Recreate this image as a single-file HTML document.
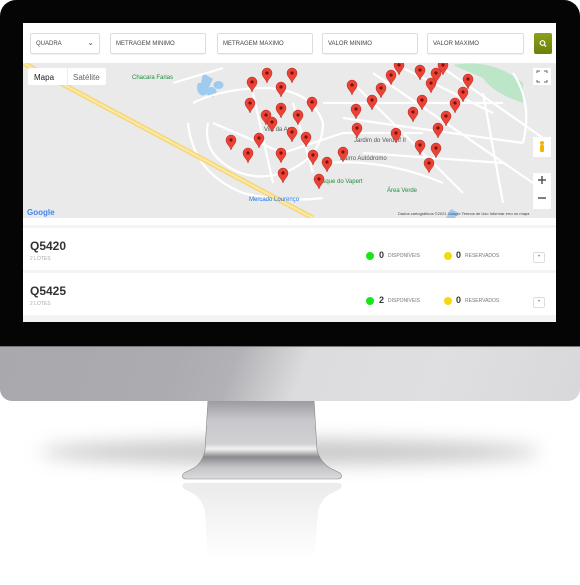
<!DOCTYPE html>
<html><head><meta charset="utf-8">
<style>
*{margin:0;padding:0;box-sizing:border-box}
body{width:580px;height:585px;background:#fff;position:relative;overflow:hidden;font-family:"Liberation Sans",sans-serif}
.bezel{position:absolute;left:0;top:0;width:580px;height:346px;background:#050505;border-radius:16px 16px 0 0}
.chin{position:absolute;left:0;top:346px;width:580px;height:55px;border-radius:0 0 12px 12px;background:linear-gradient(110deg,#a9a9ad 0%,#acacb0 30%,#b2b2b6 40%,#dcdcdf 52%,#dfdfe1 75%,#d8d8da 100%);border-top:1px solid #777}
.shadow{position:absolute;left:40px;top:440px;width:500px;height:24px;border-radius:50%;background:#b8b8b8;filter:blur(9px);opacity:.8}
.screen{position:absolute;left:23px;top:23px;width:533px;height:299px;background:#fff;overflow:hidden}
.inp{position:absolute;top:10px;height:21px;border:1px solid #ddd;border-radius:2px;background:#fff;font-size:6px;color:#444;padding:7px 0 0 5px;box-shadow:0 1px 1px rgba(0,0,0,.06)}
.btn{position:absolute;left:511px;top:10px;width:18px;height:21px;background:linear-gradient(#8aa21a,#6b7f0a);border-radius:2px}
.map{position:absolute;left:0;top:40px;width:533px;height:155px;background:#eaeaea;overflow:hidden}
.row{position:absolute;left:0;width:533px;height:42px;background:#fff}
.t{position:absolute;left:7px;top:11px;font-size:12px;font-weight:bold;color:#333}
.s{position:absolute;left:7px;top:28px;font-size:5px;color:#aaa}
.d{position:absolute;top:24px;width:8px;height:8px;border-radius:50%}
.n{position:absolute;top:22px;font-size:9px;font-weight:bold;color:#333}
.l{position:absolute;top:25px;font-size:5px;color:#777}
.pl{position:absolute;left:510px;top:24px;width:12px;height:11px;border:1px solid #ddd;border-radius:2px;font-size:6px;color:#888;text-align:center;line-height:9px}
</style></head><body>
<div class="shadow"></div>
<svg style="position:absolute;left:0;top:0" width="580" height="585">
<defs>
<linearGradient id="st" x1="0" y1="0" x2="0" y2="1">
<stop offset="0" stop-color="#9a9a9e"/><stop offset=".25" stop-color="#c8c8cc"/><stop offset=".55" stop-color="#d0d0d3"/><stop offset=".62" stop-color="#f2f2f2"/><stop offset=".72" stop-color="#8a8a8e"/><stop offset=".85" stop-color="#c4c4c7"/><stop offset="1" stop-color="#dcdcde"/></linearGradient>
<linearGradient id="rf" x1="0" y1="0" x2="0" y2="1"><stop offset="0" stop-color="#e6e6e8"/><stop offset="1" stop-color="#fff"/></linearGradient>
</defs>
<path d="M208 400 L314 400 L317 450 Q320 462 330 468 L340 473 Q344 478 338 479 L186 479 Q180 478 184 473 L194 468 Q203 462 205 450 Z" fill="url(#st)" stroke="#888" stroke-width=".6"/>
<path d="M186 483 L338 483 Q344 484 340 489 L330 494 Q320 500 318 512 L314 560 L208 560 L205 512 Q203 500 194 494 L184 489 Q180 484 186 483Z" fill="url(#rf)" opacity=".8"/>
</svg>
<div class="bezel"></div>
<div class="chin"></div>
<div class="screen">
<div class="inp" style="left:7px;width:70px">QUADRA<span style="position:absolute;right:5px;top:4px;font-size:8px;color:#555">&#8964;</span></div>
<div class="inp" style="left:87px;width:96px">METRAGEM MINIMO</div>
<div class="inp" style="left:194px;width:96px">METRAGEM MAXIMO</div>
<div class="inp" style="left:299px;width:96px">VALOR MINIMO</div>
<div class="inp" style="left:404px;width:97px">VALOR MAXIMO</div>
<div class="btn"><svg width="18" height="21"><circle cx="8.5" cy="10" r="2.3" fill="none" stroke="#fff" stroke-width="1.2"/><path d="M10.2 11.7L12 13.5" stroke="#fff" stroke-width="1.3"/></svg></div>
<div class="map">
<svg width="533" height="155" style="position:absolute;left:0;top:0">
<defs><g id="p"><path d="M0 10 C-1 6 -5 4 -5 0 A5 5 0 1 1 5 0 C5 4 1 6 0 10Z" fill="#ea4335" stroke="#b3261e" stroke-width=".5"/><circle r="1.6" fill="#7a1010"/></g></defs>
<path d="M430 2 Q470 -5 500 20 L500 40 Q470 30 460 15Z" fill="#bde5c8"/>
<path d="M180 10 l10 6 -4 8 -8 -4Z M195 18 a5 4 0 1 0 1 0Z" fill="#9fcbf0"/>
<path d="M175 20 a6 8 0 1 0 10 0Z M188 24 a5 5 0 1 0 1 0Z" fill="#9fcbf0"/>
<path d="M420 160 l8 -14 6 3 -4 14Z" fill="#9fcbf0"/>
<g stroke="#fff" stroke-width="2.2" fill="none">
<path d="M170 40 Q200 25 245 25 Q290 28 300 60 Q300 95 260 110 Q225 120 200 100 Q180 85 185 60"/>
<path d="M165 60 Q170 110 220 130 Q260 140 300 135"/>
<path d="M190 60 L260 90 L320 70 L400 70"/><path d="M230 30 L250 120"/><path d="M270 40 L290 110"/>
<path d="M300 40 L480 40"/><path d="M320 55 L500 80"/><path d="M340 90 L480 100"/><path d="M350 10 L510 120"/><path d="M380 5 L470 50"/><path d="M420 5 L520 75"/><path d="M330 20 L440 130"/><path d="M300 100 Q360 95 420 120"/><path d="M460 30 L480 140"/><path d="M490 10 Q510 40 500 80"/><path d="M150 20 L200 5"/>
</g>
<path d="M0 0 L290 155" stroke="#f5d77a" stroke-width="5"/>
<path d="M0 0 L290 155" stroke="#fbe9a8" stroke-width="2"/>
<rect x="5" y="5" width="78" height="17" fill="#fff" rx="2"/>
<rect x="44" y="5" width="1" height="17" fill="#eee"/>
<text x="11" y="17" font-size="8" fill="#222" font-family="Liberation Sans">Mapa</text>
<text x="50" y="17" font-size="8" fill="#666" font-family="Liberation Sans">Satélite</text>
<text x="109" y="16" font-size="6" fill="#1e8e3e" font-family="Liberation Sans">Chacara Farias</text>
<text x="241" y="68" font-size="6" fill="#555" font-family="Liberation Sans">Vila da Ana</text>
<text x="331" y="79" font-size="6" fill="#555" font-family="Liberation Sans">Jardim do Verdeff II</text>
<text x="317" y="97" font-size="6" fill="#555" font-family="Liberation Sans">Bairro Autódromo</text>
<text x="292" y="120" font-size="6" fill="#1e8e3e" font-family="Liberation Sans">Bosque do Vapert</text>
<text x="364" y="129" font-size="6" fill="#1e8e3e" font-family="Liberation Sans">Área Verde</text>
<text x="226" y="138" font-size="6" fill="#1a73e8" font-family="Liberation Sans">Mercado Lourenço</text>
<text x="4" y="152" font-size="8" font-weight="bold" fill="#4285f4" font-family="Liberation Sans">Google</text>
<text x="375" y="152" font-size="4" fill="#444" font-family="Liberation Sans">Dados cartográficos ©2021 Google   Termos de Uso   Informar erro no mapa</text>
<rect x="510" y="5" width="18" height="17" fill="#fff"/>
<path d="M514 10v-2h3M521 8h3v2M524 17v2h-3M517 19h-3v-2" stroke="#666" stroke-width="1" fill="none"/>
<rect x="510" y="74" width="18" height="20" fill="#fff"/>
<circle cx="519" cy="80" r="2" fill="#f4b400"/><rect x="517" y="82" width="4" height="7" rx="1" fill="#f4b400"/>
<rect x="510" y="110" width="18" height="36" fill="#fff"/>
<path d="M515 117h8M519 113v8M515 135h8" stroke="#555" stroke-width="1.5"/>
<g transform="translate(-23,-63)">
<use href="#p" x="267" y="73"/><use href="#p" x="292" y="73"/><use href="#p" x="252" y="82"/><use href="#p" x="281" y="87"/><use href="#p" x="250" y="103"/><use href="#p" x="281" y="108"/><use href="#p" x="266" y="115"/><use href="#p" x="298" y="115"/><use href="#p" x="312" y="102"/><use href="#p" x="292" y="132"/><use href="#p" x="306" y="137"/><use href="#p" x="231" y="140"/><use href="#p" x="259" y="138"/><use href="#p" x="248" y="153"/><use href="#p" x="281" y="153"/><use href="#p" x="313" y="155"/><use href="#p" x="327" y="162"/><use href="#p" x="283" y="173"/><use href="#p" x="319" y="179"/><use href="#p" x="343" y="152"/><use href="#p" x="352" y="85"/><use href="#p" x="381" y="88"/><use href="#p" x="391" y="75"/><use href="#p" x="399" y="65"/><use href="#p" x="372" y="100"/><use href="#p" x="356" y="109"/><use href="#p" x="357" y="128"/><use href="#p" x="396" y="133"/><use href="#p" x="413" y="112"/><use href="#p" x="422" y="100"/><use href="#p" x="431" y="83"/><use href="#p" x="436" y="73"/><use href="#p" x="443" y="65"/><use href="#p" x="468" y="79"/><use href="#p" x="463" y="92"/><use href="#p" x="455" y="103"/><use href="#p" x="446" y="116"/><use href="#p" x="438" y="128"/><use href="#p" x="420" y="145"/><use href="#p" x="436" y="148"/><use href="#p" x="429" y="163"/><use href="#p" x="420" y="70"/><use href="#p" x="272" y="122"/>
</g>
</svg>
</div>
<div style="position:absolute;left:0;top:195px;width:533px;height:10px;background:#fff"></div>
<div style="position:absolute;left:0;top:202px;width:533px;height:3px;background:#f3f3f3"></div>
<div class="row" style="top:205px">
<div class="t">Q5420</div><div class="s">2 LOTES</div>
<div class="d" style="left:343px;background:#19e619"></div><div class="n" style="left:356px">0</div><div class="l" style="left:365px">DISPONÍVEIS</div>
<div class="d" style="left:421px;background:#f5d90a"></div><div class="n" style="left:433px">0</div><div class="l" style="left:442px">RESERVADOS</div>
<div class="pl">•</div></div>
<div style="position:absolute;left:0;top:247px;width:533px;height:3px;background:#f3f3f3"></div>
<div class="row" style="top:250px">
<div class="t">Q5425</div><div class="s">2 LOTES</div>
<div class="d" style="left:343px;background:#19e619"></div><div class="n" style="left:356px">2</div><div class="l" style="left:365px">DISPONÍVEIS</div>
<div class="d" style="left:421px;background:#f5d90a"></div><div class="n" style="left:433px">0</div><div class="l" style="left:442px">RESERVADOS</div>
<div class="pl">•</div></div>
<div style="position:absolute;left:0;top:292px;width:533px;height:7px;background:#f3f3f3"></div>
</div>
</body></html>
